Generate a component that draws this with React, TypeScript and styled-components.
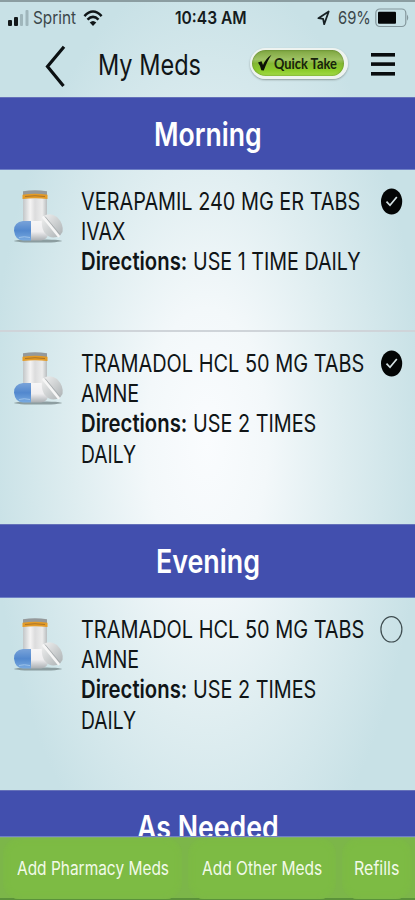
import React, { useLayoutEffect, useRef, useState } from "react";
import styled, { createGlobalStyle, css } from "styled-components";

const GlobalStyle = createGlobalStyle`
  *, *::before, *::after { box-sizing: border-box; }
  body { margin: 0; font-family: Inter, "Liberation Sans", sans-serif; }
  button { font: inherit; color: inherit; border: 0; padding: 0; background: none; cursor: pointer; }
  svg { display: block; flex: none; }
`;

const Screen = styled.div`
  width: 415px;
  height: 900px;
  overflow: hidden;
  display: flex;
  flex-direction: column;
  color: #101517;
  border-top: 2px solid #8b9da1;
  background: radial-gradient(ellipse 218px 470px at 207px 438px, #fafcfe 0%, #f3f8fa 28%, #deedf0 62%, #c8e1e6 100%);
`;

const FitBox = styled.span<{ $width: number }>`
  display: block;
  flex: none;
  width: ${(p) => p.$width}px;
  white-space: nowrap;
`;

const FitInner = styled.span`
  display: inline-block;
  transform-origin: 0 50%;
`;

/** A single line of text condensed horizontally to fill the given width. */
function FitText({ width, children }: { width: number; children: React.ReactNode }) {
  const ref = useRef<HTMLSpanElement>(null);
  const [scale, setScale] = useState(1);
  useLayoutEffect(() => {
    const natural = ref.current?.offsetWidth;
    if (natural) setScale(width / natural);
  }, [width, children]);
  return (
    <FitBox $width={width}>
      <FitInner ref={ref} style={{ transform: `scaleX(${scale})` }}>{children}</FitInner>
    </FitBox>
  );
}

const StatusBar = styled.div`
  flex: none;
  height: 32px;
  display: grid;
  grid-template-columns: 175px 142px 1fr;
  align-items: center;
  font-size: 17.5px;
  line-height: 32px;
  color: #3b474a;
`;

const StatusGroup = styled.div<{ $gap: number; $inset?: number }>`
  display: flex;
  align-items: center;
  gap: ${(p) => p.$gap}px;
  padding-left: ${(p) => p.$inset ?? 0}px;
`;

const Clock = styled.div`
  font-weight: 600;
  color: #151b1d;
`;

const TitleBar = styled.header`
  flex: none;
  height: 63px;
  display: flex;
  align-items: flex-start;
  padding-left: 45px;
`;

const BackButton = styled.button`
  width: 53px;
  height: 60px;
  padding-top: 6px;
`;

const Title = styled.h1`
  margin: 0;
  width: 152px;
  font-size: 29px;
  font-weight: 400;
  line-height: 62px;
`;

const QuickTake = styled.button`
  display: flex;
  align-items: center;
  width: 98px;
  height: 31px;
  margin-top: 14px;
  padding-left: 5px;
  gap: 1px;
  border: 2px solid #eef3f0;
  border-right-width: 4px;
  border-bottom-width: 3px;
  border-radius: 16px;
  background: linear-gradient(#7da53f 0%, #9fc264 36%, #84b833 52%, #8ccb2b 78%, #a4dc48 100%);
  box-shadow: 0 1px 2px #8e9c9c, inset 0 0 2px #53752a;
  font-family: Lato, Inter, sans-serif;
  font-size: 15.5px;
  font-weight: 700;
  line-height: 24px;
  color: #17230c;
`;

const MenuButton = styled.button`
  margin: 18px 0 0 23px;
`;

const SectionHeader = styled.h2<{ $height: number }>`
  flex: none;
  height: ${(p) => p.$height}px;
  margin: 0;
  overflow: hidden;
  display: flex;
  justify-content: center;
  background: #424fae;
  border-top: 1px solid #6571b9;
  border-bottom: 1px solid #6e80c6;
  color: #fff;
  font-size: 32px;
  font-weight: 600;
  line-height: 73px;
`;

const MedRow = styled.article<{ $height: number; $divided?: boolean }>`
  flex: none;
  height: ${(p) => p.$height}px;
  display: grid;
  grid-template-columns: 81px 299px 1fr;
  align-items: start;
  padding-top: 16px;
  ${(p) => p.$divided && css`border-bottom: 2px solid #cfd4d9;`}
`;

const MedIconSlot = styled.div`
  padding: 3px 0 0 12px;
`;

const MedText = styled.div`
  font-size: 24.5px;
  line-height: 30.2px;
`;

const Line = styled.div`
  display: flex;
  gap: 6px;
`;

const Strong = styled.span`
  font-weight: 600;
`;

const Footer = styled.nav`
  flex: none;
  height: 63px;
  display: grid;
  grid-template-columns: 185px 154px 76px;
  background: #7cb649;
  border-top: 1px solid #83b06b;
  border-bottom: 2px solid #5b923a;
`;

const FooterButton = styled.button<{ $inset: number }>`
  display: flex;
  align-items: center;
  padding-left: ${(p) => p.$inset}px;
  color: #f2fae9;
  font-size: 18.5px;
  line-height: 61px;
  border-radius: 16px;
  background: #7dbb44;
  box-shadow: inset 0 0 6px #7cb649;
  margin: 0 3px;
`;

const Signal = () => (
  <svg width="22" height="18" viewBox="0 0 22 18">
    <rect x="0" y="11" width="4" height="6" rx="1" fill="#14191b" />
    <rect x="6" y="8" width="4" height="9" rx="1" fill="#14191b" />
    <rect x="12" y="5" width="3" height="12" rx="1" fill="#9fb6bb" />
    <rect x="17.5" y="1" width="3" height="16" rx="1" fill="#9fb6bb" />
  </svg>
);

const Wifi = () => (
  <svg width="20" height="17" viewBox="0 0 20 17" fill="none" stroke="#101618">
    <path d="M1.4 6.1Q10-2.9 18.6 6.1" strokeWidth="2.5" />
    <path d="M4.5 9.7Q10 4.2 15.5 9.7" strokeWidth="2.5" />
    <path d="M10 16L6.7 12.4Q10 9.4 13.3 12.4Z" fill="#101618" stroke="none" />
  </svg>
);

const Location = () => (
  <svg width="13" height="16" viewBox="0 0 13 16" fill="none" stroke="#172023" strokeWidth="1.8" strokeLinejoin="round">
    <path d="M11.7 1.5L1.4 8.2L6.1 8.8L7.2 14.2Z" />
  </svg>
);

const Battery = () => (
  <svg width="35" height="20" viewBox="0 0 35 20">
    <rect x=".8" y="1" width="30" height="17.5" rx="4" fill="none" stroke="#84979c" strokeWidth="1.2" />
    <rect x="3" y="3.7" width="18" height="12" rx="1" fill="#050708" />
    <path d="M32 6.5Q34.5 9.5 32 12.8Z" fill="#84979c" />
  </svg>
);

const Chevron = () => (
  <svg width="22" height="44" viewBox="0 0 22 44">
    <path d="M19 1.8L2.5 21.5L18.5 41" fill="none" stroke="#0b1012" strokeWidth="3.2" />
  </svg>
);

const BoldCheck = () => (
  <svg width="16" height="18" viewBox="0 0 16 18">
    <path d="M1 8.5L4.5 7.2L6 11Q8.5 4.8 14.5.8Q10.5 6.5 6.8 16.5L4.3 16.2Q3.3 11.5 1 8.5Z" fill="#0b1206" />
  </svg>
);

const MenuIcon = () => (
  <svg width="25" height="26" viewBox="0 0 25 26" fill="#080c0e">
    <rect x="0" y="1" width="24" height="3.6" />
    <rect x="0" y="10.3" width="24" height="3.6" />
    <rect x="0" y="20" width="24" height="3.6" />
  </svg>
);

function PillBottle({ id }: { id: string }) {
  return (
    <svg width="53" height="56" viewBox="0 0 53 56">
      <defs>
        <linearGradient id={`${id}-glass`} x1="0" x2="1">
          <stop offset="0" stopColor="#c2c6c8" />
          <stop offset=".3" stopColor="#f5f4f4" />
          <stop offset=".5" stopColor="#dcdcdd" />
          <stop offset=".8" stopColor="#ececec" />
          <stop offset="1" stopColor="#b9bdbf" />
        </linearGradient>
        <linearGradient id={`${id}-blue`} x1="0" y1="0" x2="0" y2="1">
          <stop offset="0" stopColor="#79a3d9" />
          <stop offset=".5" stopColor="#5288ce" />
          <stop offset="1" stopColor="#78aae0" />
        </linearGradient>
        <linearGradient id={`${id}-white`} x1="0" y1="0" x2="0" y2="1">
          <stop offset="0" stopColor="#f7f6f7" />
          <stop offset=".55" stopColor="#efeef0" />
          <stop offset="1" stopColor="#a9aeb2" />
        </linearGradient>
        <linearGradient id={`${id}-tablet`} x1="0" y1="0" x2="1" y2="1">
          <stop offset="0" stopColor="#f2f2f2" />
          <stop offset="1" stopColor="#aab0b2" />
        </linearGradient>
      </defs>
      <ellipse cx="26" cy="52" rx="24" ry="1.6" fill="#748487" opacity=".75" />
      <path d="M11 8H35V45Q23 49 11 45Z" fill={`url(#${id}-glass)`} />
      <path d="M11 2.2Q23 .3 35 2.2V8H11Z" fill="#95999a" />
      <path d="M10.5 5.7Q23 3.7 35.5 5.7V10Q23 8.5 10.5 10Z" fill="#e49b26" />
      <path d="M13 7.5Q23 6 33 7.5" fill="none" stroke="#aa7528" strokeWidth="1" />
      <path d="M19 32H29Q37 34 37 42Q36 51 29 51.5H19Z" fill={`url(#${id}-white)`} />
      <path d="M31 27.5Q38 23 45 28Q52 35 50.5 43L48 46.5Q39 52 32 43Q28 35 31 27.5Z" fill={`url(#${id}-tablet)`} />
      <path d="M31.5 28.5L46.5 47" stroke="#f6f6f6" strokeWidth="2.6" strokeLinecap="round" />
      <path d="M33 27.5L48 45.5" stroke="#a2a7a9" strokeWidth=".8" />
      <path d="M19 32H11Q2 33 2 41.5Q3 51 11 51.5H19Z" fill={`url(#${id}-blue)`} />
      <path d="M7 48.5Q12 47 18 48.5" fill="none" stroke="#9cc2ea" strokeWidth="1" />
    </svg>
  );
}

const TakenMark = ({ taken }: { taken: boolean }) => (
  <svg width="24" height="30" viewBox="0 0 24 30">
    {taken ? (
      <>
        <ellipse cx="11.6" cy="15.5" rx="10.6" ry="13" fill="#030505" />
        <path d="M6.5 15.7L10 19.3L16.8 11" fill="none" stroke="#d3e0e2" strokeWidth="1.7" />
      </>
    ) : (
      <ellipse cx="11.4" cy="15.3" rx="10.5" ry="12.7" fill="none" stroke="#3f4d50" strokeWidth="1.2" />
    )}
  </svg>
);

type Segment = { text: string; width: number; strong?: boolean };
type Med = { id: string; height: number; divided?: boolean; taken: boolean; lines: Segment[][] };

const tramadolLines: Segment[][] = [
  [{ text: "TRAMADOL HCL 50 MG TABS", width: 283 }],
  [{ text: "AMNE", width: 58 }],
  [{ text: "Directions:", width: 106, strong: true }, { text: "USE 2 TIMES", width: 123 }],
  [{ text: "DAILY", width: 55 }],
];

const verapamil: Med = {
  id: "verapamil",
  height: 162,
  divided: true,
  taken: true,
  lines: [
    [{ text: "VERAPAMIL 240 MG ER TABS", width: 279 }],
    [{ text: "IVAX", width: 44 }],
    [{ text: "Directions:", width: 106, strong: true }, { text: "USE 1 TIME DAILY", width: 168 }],
  ],
};

const sections: { title: string; width: number; height: number; meds: Med[] }[] = [
  {
    title: "Morning",
    width: 108,
    height: 73,
    meds: [verapamil, { id: "tramadol-am", height: 192, taken: true, lines: tramadolLines }],
  },
  {
    title: "Evening",
    width: 104,
    height: 74,
    meds: [{ id: "tramadol-pm", height: 192, taken: false, lines: tramadolLines }],
  },
  { title: "As Needed", width: 142, height: 47, meds: [] },
];

const actions = [
  { label: "Add Pharmacy Meds", width: 152, inset: 14 },
  { label: "Add Other Meds", width: 120, inset: 14 },
  { label: "Refills", width: 45, inset: 12 },
];

export default function App() {
  return (
    <>
      <GlobalStyle />
      <Screen>
        <StatusBar>
          <StatusGroup $gap={3} $inset={8}>
            <Signal />
            <FitText width={43}>Sprint</FitText>
            <StatusGroup $gap={0} $inset={4}><Wifi /></StatusGroup>
          </StatusGroup>
          <Clock><FitText width={72}>10:43 AM</FitText></Clock>
          <StatusGroup $gap={8}>
            <Location />
            <StatusGroup $gap={4}>
              <FitText width={33}>69%</FitText>
              <Battery />
            </StatusGroup>
          </StatusGroup>
        </StatusBar>
        <TitleBar>
          <BackButton aria-label="Back"><Chevron /></BackButton>
          <Title><FitText width={103}>My Meds</FitText></Title>
          <QuickTake>
            <BoldCheck />
            <FitText width={63}>Quick Take</FitText>
          </QuickTake>
          <MenuButton aria-label="Menu"><MenuIcon /></MenuButton>
        </TitleBar>
        {sections.map((section) => (
          <React.Fragment key={section.title}>
            <SectionHeader $height={section.height}>
              <FitText width={section.width}>{section.title}</FitText>
            </SectionHeader>
            {section.meds.map((med) => (
              <MedRow key={med.id} $height={med.height} $divided={med.divided}>
                <MedIconSlot><PillBottle id={med.id} /></MedIconSlot>
                <MedText>
                  {med.lines.map((line, i) => (
                    <Line key={i}>
                      {line.map((seg) => (
                        <FitText key={seg.text} width={seg.width}>
                          {seg.strong ? <Strong>{seg.text}</Strong> : seg.text}
                        </FitText>
                      ))}
                    </Line>
                  ))}
                </MedText>
                <TakenMark taken={med.taken} />
              </MedRow>
            ))}
          </React.Fragment>
        ))}
        <Footer>
          {actions.map((action) => (
            <FooterButton key={action.label} $inset={action.inset}>
              <FitText width={action.width}>{action.label}</FitText>
            </FooterButton>
          ))}
        </Footer>
      </Screen>
    </>
  );
}
